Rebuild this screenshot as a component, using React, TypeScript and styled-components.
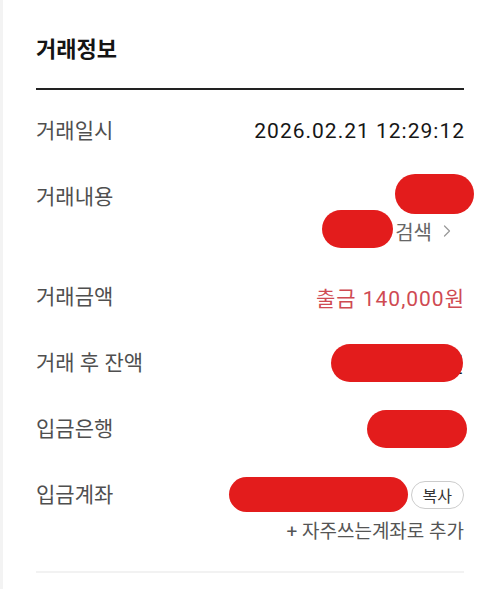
import React, { FC } from "react";
import styled, { createGlobalStyle } from "styled-components";
import { ChevronRight } from "lucide-react";

const GlobalStyle = createGlobalStyle`
    html, body {
        margin: 0;
        padding: 0;
        background: #f3f3f3;
    }
    body {
        font-family: Roboto, "Noto Sans CJK KR", sans-serif;
    }
`;

const Card = styled.div`
    margin-left: 3px;
    min-height: 589px;
    background: #ffffff;
    padding: 0 17px 0 33px;
    box-sizing: border-box;
`;

const Header = styled.div`
    padding: 36px 0 24px;
    border-bottom: 2px solid #222222;
`;

const Title = styled.h2`
    margin: 0;
    font-size: 22px;
    line-height: 28px;
    font-weight: 700;
    color: #141414;
`;

const List = styled.div`
    padding-top: 8px;
    padding-bottom: 9px;
    border-bottom: 2px solid #f2f2f2;
`;

const Row = styled.div`
    display: flex;
    justify-content: space-between;
    align-items: flex-start;
    padding: 16px 0;
`;

const Label = styled.span`
    font-size: 21px;
    line-height: 34px;
    color: #4f4f4f;
`;

const Value = styled.div`
    display: flex;
    flex-direction: column;
    align-items: flex-end;
`;

const Line = styled.div<{ $small?: boolean }>`
    display: flex;
    align-items: center;
    height: 34px;
    font-size: ${(p) => (p.$small ? "19px" : "21px")};
    color: ${(p) => (p.$small ? "#555555" : "#161616")};
`;

const Numeric = styled.span`
    letter-spacing: 1px;
    margin-right: -1px;
`;

const Amount = styled(Numeric)`
    color: #cf4a52;
`;

const Sub = styled.span`
    font-size: 20px;
    color: #666666;
    margin-left: 2px;
`;

const Redact = styled.span<{ $w: number; $h: number; $right?: number; $dy?: number }>`
    position: relative;
    z-index: 1;
    display: inline-block;
    width: ${(p) => p.$w}px;
    height: ${(p) => p.$h}px;
    border-radius: ${(p) => p.$h / 2}px;
    background: #e31c1c;
    margin-right: ${(p) => p.$right ?? 0}px;
    top: ${(p) => p.$dy ?? 0}px;
`;

const Hidden = styled.span`
    color: #1a1a1a;
`;

const Chip = styled.button`
    height: 28px;
    padding: 0 11px;
    margin-left: 3px;
    border: 1px solid #cccccc;
    border-radius: 14px;
    background: #ffffff;
    font-family: inherit;
    font-size: 16px;
    color: #333333;
`;

const App: FC = () => {
    return (
        <>
            <GlobalStyle />
            <Card>
                <Header>
                    <Title>거래정보</Title>
                </Header>
                <List>
                    <Row>
                        <Label>거래일시</Label>
                        <Value>
                            <Line>
                                <Numeric>2026.02.21 12:29:12</Numeric>
                            </Line>
                        </Value>
                    </Row>
                    <Row>
                        <Label>거래내용</Label>
                        <Value>
                            <Line>
                                <Redact $w={79} $h={40} $right={-10} $dy={-3} />
                            </Line>
                            <Line>
                                <Redact $w={71} $h={38} $dy={-2} />
                                <Sub>검색</Sub>
                                <ChevronRight
                                    size={20}
                                    color="#9a9a9a"
                                    strokeWidth={1.5}
                                    style={{ marginLeft: 5, marginRight: 7 }}
                                />
                            </Line>
                        </Value>
                    </Row>
                    <Row>
                        <Label>거래금액</Label>
                        <Value>
                            <Line>
                                <Amount>출금 140,000원</Amount>
                            </Line>
                        </Value>
                    </Row>
                    <Row>
                        <Label>거래 후 잔액</Label>
                        <Value>
                            <Line>
                                <Redact $w={132} $h={38} $right={-18} />
                                <Hidden>원</Hidden>
                            </Line>
                        </Value>
                    </Row>
                    <Row>
                        <Label>입금은행</Label>
                        <Value>
                            <Line>
                                <Redact $w={100} $h={38} $right={-3} />
                            </Line>
                        </Value>
                    </Row>
                    <Row>
                        <Label>입금계좌</Label>
                        <Value>
                            <Line>
                                <Redact $w={179} $h={35} $dy={-1} />
                                <Chip>복사</Chip>
                            </Line>
                            <Line $small>+ 자주쓰는계좌로 추가</Line>
                        </Value>
                    </Row>
                </List>
            </Card>
        </>
    );
};

export default App;
